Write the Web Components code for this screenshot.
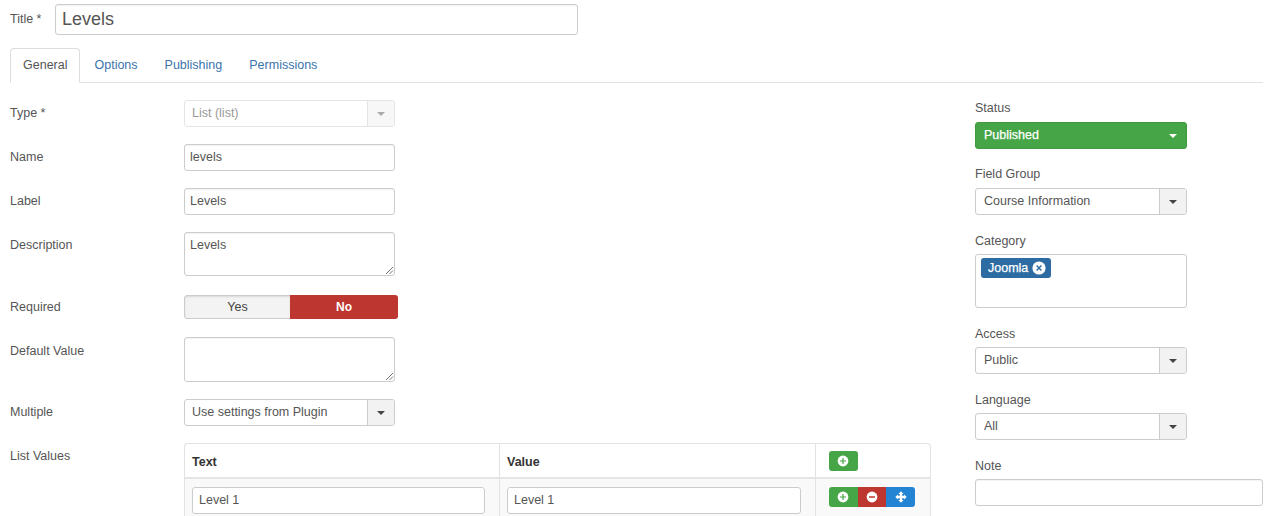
<!DOCTYPE html>
<html lang="en"><head><meta charset="utf-8"><title>Levels</title>
<style>
html,body{margin:0;padding:0;height:516px;overflow:hidden;background:#fff}
body{font:12.5px/18px "Liberation Sans",Arial,sans-serif;color:#555}
</style></head><body>
<x-page>
  <x-title-row label="Title *" value="Levels"></x-title-row>
  <x-tabs active="General" items="General,Options,Publishing,Permissions"></x-tabs>
  <x-columns>
    <div slot="main">
      <x-row label="Type *" gap="17"><x-select value="List (list)" disabled></x-select></x-row>
      <x-row label="Name" gap="17"><x-text value="levels"></x-text></x-row>
      <x-row label="Label" gap="17"><x-text value="Levels"></x-text></x-row>
      <x-row label="Description" gap="19"><x-text value="Levels" area h="44"></x-text></x-row>
      <x-row label="Required" gap="18" top="3"><x-toggle></x-toggle></x-row>
      <x-row label="Default Value" gap="17" top="5"><x-text area h="45"></x-text></x-row>
      <x-row label="Multiple" gap="17"><x-select value="Use settings from Plugin"></x-select></x-row>
      <x-row label="List Values" gap="0"><x-values></x-values></x-row>
    </div>
    <div slot="side">
      <x-side label="Status" gap="5" after="16"><x-status value="Published"></x-status></x-side>
      <x-side label="Field Group" gap="5" after="17"><x-select value="Course Information"></x-select></x-side>
      <x-side label="Category" gap="4" after="17"><x-multi><x-chip>Joomla</x-chip></x-multi></x-side>
      <x-side label="Access" gap="4" after="17"><x-select value="Public"></x-select></x-side>
      <x-side label="Language" gap="4" after="17"><x-select value="All"></x-select></x-side>
      <x-side label="Note" gap="4" after="0"><x-text value="" wide></x-text></x-side>
    </div>
  </x-columns>
</x-page>
<script>
const def=(name,css,html,init)=>{customElements.define(name,class extends HTMLElement{
  connectedCallback(){ if(this.shadowRoot)return;
    const s=this.attachShadow({mode:'open'});
    const a=n=>this.getAttribute(n);
    s.innerHTML='<style>'+css+'</style>'+(typeof html==='function'?html(a,this):html);
    if(init)init(s,a,this);
  }});};
const ICON={
 plus:'<svg width="12" height="12" viewBox="0 0 12 12"><circle cx="6" cy="6" r="5.4" fill="#fff"/><path d="M3 6h6M6 3v6" stroke="COL" stroke-width="1.2"/></svg>',
 minus:'<svg width="12" height="12" viewBox="0 0 12 12"><circle cx="6" cy="6" r="5.4" fill="#fff"/><path d="M3 6h6" stroke="COL" stroke-width="1.6"/></svg>',
 move:'<svg width="12" height="12" viewBox="0 0 12 12"><path fill="#fff" d="M6 .3 8.6 3H7.2V4.8H9V3.4L11.7 6 9 8.6V7.2H7.2V9H8.6L6 11.7 3.4 9H4.8V7.2H3V8.6L.3 6 3 3.4V4.8H4.8V3H3.4Z"/></svg>'
};
def('x-page',':host{display:block;padding:4px 17px 0 10px}','<slot></slot>');
def('x-title-row',`:host{display:flex;align-items:flex-start;gap:12px;height:44px}
 .l{line-height:18px;padding-top:6px;width:33px;white-space:nowrap}
 .i{box-sizing:border-box;width:523px;height:31px;border:1px solid #ccc;border-radius:3px;padding:0 6px;font-size:18px;line-height:29px;color:#555;box-shadow:inset 0 1px 1px rgba(0,0,0,.05)}`,
 a=>`<div class="l">${a('label')}</div><div class="i">${a('value')}</div>`);
def('x-tabs',`:host{display:flex;height:35px;box-sizing:border-box;border-bottom:1px solid #e2e2e2;margin-bottom:17px}
 .t{box-sizing:border-box;height:35px;padding:0 12px;line-height:33px;color:#3a74ab;border:1px solid transparent;margin-right:1px}
 .a{color:#555;background:#fff;border-color:#ddd #ddd #fff;border-radius:4px 4px 0 0}`,
 a=>a('items').split(',').map(t=>`<div class="t ${t===a('active')?'a':''}">${t}</div>`).join(''));
def('x-columns',':host{display:flex;gap:44px;align-items:flex-start}.m{width:921px;flex:none}.s{width:288px;flex:none;margin-top:-1px}',
 '<div class="m"><slot name="main"></slot></div><div class="s"><slot name="side"></slot></div>');
def('x-row',`:host{display:flex;align-items:flex-start}
 .l{width:174px;flex:none;padding-top:4px;line-height:18px;white-space:nowrap}
 .c{flex:1;min-width:0}`,
 a=>`<div class="l">${a('label')}</div><div class="c"><slot></slot></div>`,
 (s,a,e)=>{e.style.marginBottom=a('gap')+'px'; if(a('top'))s.querySelector('.l').style.paddingTop=a('top')+'px';});
def('x-text',`:host{display:block;box-sizing:border-box;width:211px;height:27px;border:1px solid #ccc;border-radius:3px;background:#fff;padding:3px 5px;line-height:19px;color:#555;position:relative;box-shadow:inset 0 1px 1px rgba(0,0,0,.05)}
 :host([wide]){width:288px}
 svg{position:absolute;right:0;bottom:0}`,
 (a)=>`${a('value')||''}${a('area')!==null?'<svg width="10" height="10" viewBox="0 0 10 10"><path d="M9 2 2 9M9 5.5 5.5 9" stroke="#777" stroke-width="1" fill="none"/></svg>':''}`,
 (s,a,e)=>{if(a('h'))e.style.height=a('h')+'px';});
def('x-select',`:host{display:flex;box-sizing:border-box;width:var(--sel-w,211px);height:27px;border:1px solid #ccc;border-radius:3px;background:#fff;color:#555;overflow:hidden}
 .v{flex:1;padding:0 var(--sel-pad,7px);line-height:24px;white-space:nowrap}
 .b{width:26px;flex:none;border-left:1px solid #ccc;background:#f2f2f2;display:flex;align-items:center;justify-content:center}
 .b i{width:0;height:0;border:4px solid transparent;border-top:4px solid #444;border-bottom:0}
 :host([disabled]){border-color:#e4e4e4;color:#999}
 :host([disabled]) .b{border-color:#e4e4e4;background:#f7f7f7}
 :host([disabled]) .b i{border-top-color:#aaa}`,
 a=>`<div class="v">${a('value')}</div><div class="b"><i></i></div>`);
def('x-toggle',`:host{display:flex;width:214px;height:24px;box-sizing:border-box;border-radius:3px;overflow:hidden;line-height:22px;text-align:center}
 .y{width:106px;box-sizing:border-box;border:1px solid #ccc;border-right:0;border-radius:3px 0 0 3px;background:#f3f3f3;color:#444;box-shadow:inset 0 1px 2px rgba(0,0,0,.1)}
 .n{flex:1;background:#bd362f;color:#fff;font-weight:bold;font-size:12px;line-height:24px}`,
 '<div class="y">Yes</div><div class="n">No</div>');
def('x-values',`:host{display:block;width:747px;box-sizing:border-box;border:1px solid #e2e2e2;border-bottom:0;border-radius:4px 4px 0 0;height:73px;overflow:hidden}
 .r{display:grid;grid-template-columns:314px 316px 1fr}
 .h{height:35px;box-sizing:border-box;border-bottom:2px solid #e4e4e4;font-weight:bold;color:#333}
 .h>div{padding:9px 7px 0}
 .b{background:#f9f9f9;height:37px}
 .b>div{padding:8px 7px 0}
 .r>div+div{border-left:1px solid #e2e2e2}
 .i{box-sizing:border-box;height:27px;width:293px;border:1px solid #ccc;border-radius:3px;background:#fff;padding:3px 6px;line-height:19px;color:#555}
 .r>div+div .i{width:294px}
 .g{display:inline-flex;border-radius:3px;overflow:hidden;vertical-align:top}
 .x{width:28.67px;height:20px;display:flex;align-items:center;justify-content:center}
 .gr{background:#46a546}.re{background:#bd362f}.bl{background:#2384d3}
 .h .add{margin:-2px 0 0 6px}
 .b .acts{margin:0 0 0 6px}`,
 ()=>`<div class="r h"><div>Text</div><div>Value</div><div><span class="g add"><span class="x gr">${ICON.plus.replace('COL','#46a546')}</span></span></div></div>
 <div class="r b"><div><div class="i">Level 1</div></div><div><div class="i">Level 1</div></div><div><span class="g acts"><span class="x gr">${ICON.plus.replace('COL','#46a546')}</span><span class="x re">${ICON.minus.replace('COL','#bd362f')}</span><span class="x bl">${ICON.move}</span></span></div></div>`);
def('x-side',`:host{display:block;--sel-w:212px;--sel-pad:8px}
 .l{line-height:18px;white-space:nowrap}`,
 a=>`<div class="l">${a('label')}</div><slot></slot>`,
 (s,a,e)=>{s.querySelector('.l').style.marginBottom=a('gap')+'px';e.style.marginBottom=a('after')+'px';});
def('x-status',`:host{display:flex;box-sizing:border-box;width:212px;height:27px;border:1px solid #3f9a3f;border-radius:3px;background:#46a546;color:#fff;-webkit-text-stroke:.25px #fff;align-items:center;padding:0 8px 2px;justify-content:space-between}
 i{width:0;height:0;border:4px solid transparent;border-top:4px solid #fff;border-bottom:0;margin:2px 1px 0 0}`,
 a=>`<span>${a('value')}</span><i></i>`);
def('x-multi',`:host{display:block;box-sizing:border-box;width:212px;height:54px;border:1px solid #ccc;border-radius:3px;background:#fff;padding:3px 5px}`,'<slot></slot>');
def('x-chip',`:host{display:inline-flex;align-items:center;gap:4px;height:20px;box-sizing:border-box;padding:0 5px 0 7px;background:#2d6ca2;border-radius:3px;color:#fff;-webkit-text-stroke:.25px #fff;font-size:12.5px;vertical-align:top}
 svg{display:block}`,
 `<slot></slot><svg width="14" height="14" viewBox="0 0 14 14"><circle cx="7" cy="7" r="6.6" fill="#fff"/><path d="M4.6 4.6l4.8 4.8M9.4 4.6l-4.8 4.8" stroke="#2d6ca2" stroke-width="1.4"/></svg>`);
</script>
</body></html>
